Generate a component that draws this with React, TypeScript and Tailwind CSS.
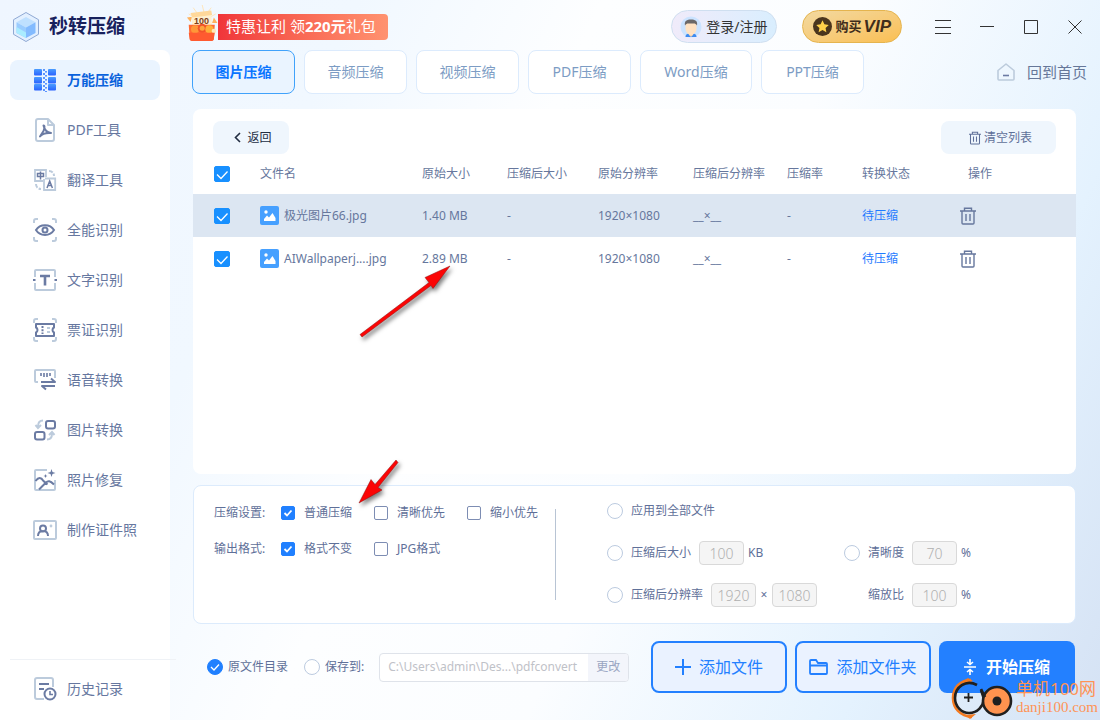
import React from 'react'

const DARK = '#6b7ba3'
const PALE = '#bccbdc'

interface IconProps {
  className?: string
}

function SvgIcon({ children }: { children: React.ReactNode }) {
  return (
    <svg width="24" height="24" viewBox="0 0 24 24" fill="none" strokeWidth="2" className="shrink-0">
      {children}
    </svg>
  )
}

const Corners = () => (
  <path d="M1 5V3a2 2 0 0 1 2-2h2M19 1h2a2 2 0 0 1 2 2v2M23 19v2a2 2 0 0 1-2 2h-2M5 23H3a2 2 0 0 1-2-2v-2" stroke={PALE} />
)

const icons: Record<string, React.ReactNode> = {
  zip: (
    <svg width="24" height="24" viewBox="0 0 24 24" className="shrink-0">
      <defs>
        <linearGradient id="zipFill" x1="0" y1="0" x2="0" y2="1">
          <stop offset="0" stopColor="#4a9dff" />
          <stop offset="1" stopColor="#2a62ff" />
        </linearGradient>
      </defs>
      {[1, 9, 16].map((y) => (
        <g key={y} fill="url(#zipFill)">
          <rect x="1" y={y} width="8" height="6.5" rx="1" />
          <rect x="15" y={y} width="8" height="6.5" rx="1" />
        </g>
      ))}
      {[1, 5, 9, 13, 17, 21].map((y) => (
        <g key={y} fill="#5c94ff">
          <rect x="10" y={y} width="2" height="2" />
          <rect x="12" y={y + 2} width="2" height="1.6" />
        </g>
      ))}
    </svg>
  ),
  pdf: (
    <SvgIcon>
      <path d="M15 1H5a2 2 0 0 0-2 2v18a2 2 0 0 0 2 2h14a2 2 0 0 0 2-2V7zM15 1v6h6" stroke={PALE} strokeLinejoin="round" />
      <path d="M10.500 7.500c1.500 0 1 3 0 5.500L7 18.500c2-2.600 5-4 11-3.500-4-.5-6.500-3-7.500-7.500" stroke={DARK} strokeLinejoin="round" strokeLinecap="round" />
    </SvgIcon>
  ),
  translate: (
    <SvgIcon>
      <path d="M13 9V2H2v11h8M12 10.500h10.200V22H11V11" stroke={PALE} strokeWidth="1.800" />
      <path d="M16 3c3 0 5 2 5 5M3 16c0 3 2 5 5 5" stroke={PALE} strokeDasharray="4 1.500" />
      <path d="M4.500 5.500h6v3h-6zM7.500 3.500v8M14 20l2.700-7 2.700 7M15 17.500h3.500" stroke={DARK} strokeWidth="1.500" />
    </SvgIcon>
  ),
  eye: (
    <SvgIcon>
      <Corners />
      <path d="M3 12c4-6.500 14-6.500 18 0-4 6.500-14 6.500-18 0z" stroke={DARK} />
      <circle cx="12" cy="12" r="2.500" stroke={DARK} />
    </SvgIcon>
  ),
  text: (
    <SvgIcon>
      <path d="M2 9V3a1 1 0 0 1 1-1h18a1 1 0 0 1 1 1v6M22 15v6a1 1 0 0 1-1 1H3a1 1 0 0 1-1-1v-6" stroke={PALE} />
      <path d="M7 8h10M12 8v9.500" stroke={DARK} strokeWidth="2.600" />
      <path d="M0 12h2.500M21.500 12h2.500" stroke={DARK} />
    </SvgIcon>
  ),
  ticket: (
    <SvgIcon>
      <Corners />
      <path d="M3 6h18v3.500c-2 1-2 4 0 5V18H3v-3.500c2-1 2-4 0-5z" stroke={DARK} strokeLinejoin="round" />
      <path d="M9.500 8v8" stroke={DARK} strokeDasharray="2 1.200" />
      <path d="M14 10h3M14 14h3" stroke={PALE} />
    </SvgIcon>
  ),
  voice: (
    <SvgIcon>
      <path d="M5 14H3a1 1 0 0 1-1-1V3a1 1 0 0 1 1-1h18a1 1 0 0 1 1 1v7" stroke={PALE} />
      <path d="M8 5v3M11 5v4M14 5v4M17 5v3" stroke={DARK} strokeWidth="1.600" />
      <path d="M8 14h14l-4-3.500M22 18H9l4 3.500" stroke={DARK} strokeLinejoin="round" />
    </SvgIcon>
  ),
  convert: (
    <SvgIcon>
      <rect x="13" y="3" width="9" height="7.500" rx="2" stroke={DARK} />
      <rect x="2" y="14" width="9.500" height="7.500" rx="2" stroke={DARK} />
      <path d="M10 2.500c-3 0-5 2-5 6M2.500 7l2.500 3L8 7M14 21.500c3 0 5-2 5-6M16 17l3-3 2.500 3" stroke={PALE} />
    </SvgIcon>
  ),
  repair: (
    <SvgIcon>
      <path d="M14 2H3a1 1 0 0 0-1 1v18a1 1 0 0 0 1 1h18a1 1 0 0 0 1-1v-9" stroke={PALE} />
      <path d="M2.500 13c3-4 5.500-4 8 0l4 3.500M6 21.500l7-7c2-2 4-2 8 2" stroke={DARK} />
      <path d="M18.500 1l1 3 3 1-3 1-1 3-1-3-3-1 3-1zM12.500 6l.6 1.400 1.400.6-1.400.6-.6 1.400-.6-1.400-1.400-.6 1.400-.6z" fill={DARK} />
    </SvgIcon>
  ),
  idphoto: (
    <SvgIcon>
      <rect x="1" y="3" width="22" height="18" rx="1" stroke={PALE} />
      <path d="M5 18c0-3 1.500-5 5-5s5 2 5 5M7 10.500a3 3 0 1 1 6 0 3 3 0 0 1-6 0z" stroke={DARK} />
      <circle cx="18" cy="8" r="1.400" fill={PALE} />
    </SvgIcon>
  ),
  history: (
    <SvgIcon>
      <path d="M20 10V3a2 2 0 0 0-2-2H4a2 2 0 0 0-2 2v17a2 2 0 0 0 2 2h7" stroke={PALE} />
      <path d="M6 7h10M6 12h5" stroke={DARK} />
      <circle cx="17" cy="17" r="5.500" stroke={DARK} />
      <path d="M17 14v3.500h3" stroke={DARK} strokeWidth="1.600" />
    </SvgIcon>
  ),
}

const navItems = [
  { icon: 'zip', label: '万能压缩', active: true },
  { icon: 'pdf', label: 'PDF工具' },
  { icon: 'translate', label: '翻译工具' },
  { icon: 'eye', label: '全能识别' },
  { icon: 'text', label: '文字识别' },
  { icon: 'ticket', label: '票证识别' },
  { icon: 'voice', label: '语音转换' },
  { icon: 'convert', label: '图片转换' },
  { icon: 'repair', label: '照片修复' },
  { icon: 'idphoto', label: '制作证件照' },
]

const tabs = [
  { label: '图片压缩', width: 'w-[103px]' },
  { label: '音频压缩', width: 'w-[103px]' },
  { label: '视频压缩', width: 'w-[103px]' },
  { label: 'PDF压缩', width: 'w-[103px]' },
  { label: 'Word压缩', width: 'w-28' },
  { label: 'PPT压缩', width: 'w-[103px]' },
]

const files = [
  { name: '极光图片66.jpg', size: '1.40 MB', resolution: '1920×1080', selected: true },
  { name: 'AIWallpaperj....jpg', size: '2.89 MB', resolution: '1920×1080', selected: false },
]

function TrashIcon({ className }: IconProps) {
  return (
    <svg viewBox="0 0 16 18" fill="none" stroke="currentColor" strokeWidth="1.4" className={className}>
      <path d="M0 4h16M4.500 4V1.200h7V4M2 4v12a1 1 0 0 0 1 1h10a1 1 0 0 0 1-1V4M6 7v7M10 7v7" />
    </svg>
  )
}

function Logo() {
  return (
    <svg width="28" height="32" viewBox="0 0 28 32">
      <path d="M14 1.500l12.500 7.200v14.600L14 30.500 1.500 23.300V8.700z" fill="#e3f0ff" stroke="#8fa9d4" />
      <path d="M14 6l9.500 5.200L14 16.500l-9.500-5.300z" fill="#bfe0ff" />
      <path d="M4.500 11.200L14 16.500V27l-9.500-5z" fill="#9accff" />
      <path d="M23.500 11.200L14 16.500V27l9.500-5z" fill="#83bbff" />
      <path d="M4.500 16L14 21.500V27l-9.500-5z" fill="#a9ecff" />
    </svg>
  )
}

function GiftIcon() {
  return (
    <svg width="36" height="44" viewBox="0 0 40 49" className="shrink-0">
      <path d="M18 0l2 8M8 3l5 7M28 3l-5 7M3 10l7 4M33 10l-7 4" stroke="#ffe3b3" />
      <path d="M1 14l6-1-2 6zM35 20l-6 0 2-6z" fill="#ffb25c" />
      <path d="M6 11l22-4 1 19H7z" fill="#fff0cf" />
      <path d="M5 9l23-3 1 5-22 3z" fill="#ffd89a" />
      <text x="9" y="21" fontSize="10" fontWeight="700" fill="#7d3d17" fontFamily="Liberation Sans, sans-serif">100</text>
      <path d="M3 22h29l-1 15a3 3 0 0 1-3 3H7a3 3 0 0 1-3-3z" fill="#ff6a32" />
      <circle cx="10" cy="27" r="4.500" fill="#ff9738" />
      <circle cx="18" cy="26" r="5" fill="#f2532a" />
      <circle cx="18" cy="26" r="2.800" fill="#ffa43d" />
      <circle cx="26" cy="27" r="4.500" fill="#ffb03a" />
      <circle cx="31" cy="29" r="2.500" fill="#ffe7b8" />
      <path d="M3 31h29l-1 6a3 3 0 0 1-3 3H7a3 3 0 0 1-3-3z" fill="#ff5a30" />
    </svg>
  )
}

function Avatar() {
  return (
    <svg width="22" height="22" viewBox="0 0 22 22">
      <circle cx="11" cy="11" r="10.500" fill="#cbe3ff" />
      <path d="M5.500 21c0-3 2-3.500 5.500-3.500s5.500.5 5.500 3.500z" fill="#3d8bf0" />
      <path d="M9 14h4v5l-2 2-2-2z" fill="#f7d3ae" />
      <path d="M5.500 7h11v5c0 4-2.500 7-5.500 7s-5.500-3-5.500-7z" fill="#ffe2c2" />
      <path d="M5 9.500C4 5 7 3.500 11 3.500s7 1.500 6 6c-1-1.500-2-2-3-2H8c-1 0-2 .5-3 2z" fill="#6b6868" />
    </svg>
  )
}

function Header() {
  return (
    <header className="flex h-[50px] shrink-0 items-center pl-3 pr-[18px] pt-[3px]">
      <Logo />
      <h1 className="ml-[9px] text-[19px] font-bold text-[#17205c]">秒转压缩</h1>
      <a href="#promo" className="ml-[61px] flex items-center text-[15px] text-white">
        <GiftIcon />
        <span className="-ml-1 flex h-[26px] items-center rounded-r bg-linear-to-r from-[#f0343a] to-[#ff9270] pl-2 pr-3">
          <span>
            特惠让利 领<b>220元</b>礼包
          </span>
        </span>
      </a>
      <div className="ml-auto flex items-center text-[#333]">
        <button className="flex h-[33px] items-center gap-1 rounded-full border border-[#cfdff0] bg-linear-to-r from-[#f0ebfa] to-[#d9eefe] pl-2 pr-2 text-[14px]">
          <Avatar />
          登录/注册
        </button>
        <button className="ml-[25px] flex h-[33px] items-center gap-1 rounded-full border border-[#e5b44e] bg-linear-to-br from-[#f2d9a0] to-[#fabf52] px-[10px] text-[#3f2d1c]">
          <svg width="19" height="19" viewBox="0 0 20 20">
            <circle cx="10" cy="10" r="10" fill="#4a351d" />
            <path d="M10 3.500l2 4.200 4.600.6-3.400 3.200.9 4.600-4.100-2.300-4.100 2.300.9-4.600-3.400-3.200 4.600-.6z" fill="#ffd04a" />
          </svg>
          <span className="flex items-center text-[13px] font-bold">
            购买<i className="ml-[2px] font-[Liberation_Sans,sans-serif] text-[17px]">VIP</i>
          </span>
        </button>
        <button aria-label="菜单" className="ml-[33px]">
          <svg width="16" height="16" viewBox="0 0 16 16" fill="none" stroke="currentColor">
            <path d="M0 1.500h16M0 8.500h16M0 14.500h16" />
          </svg>
        </button>
        <button aria-label="最小化" className="ml-[29px]">
          <svg width="14" height="14" viewBox="0 0 14 14" fill="none" stroke="currentColor">
            <path d="M0 6.500h14" />
          </svg>
        </button>
        <button aria-label="最大化" className="ml-[30px]">
          <svg width="14" height="14" viewBox="0 0 14 14" fill="none" stroke="currentColor">
            <path d="M.5.5h13v13H.5z" />
          </svg>
        </button>
        <button aria-label="关闭" className="ml-[30px]">
          <svg width="14" height="14" viewBox="0 0 14 14" fill="none" stroke="currentColor">
            <path d="M.5.5l13 13M13.500.5l-13 13" />
          </svg>
        </button>
      </div>
    </header>
  )
}

function NavButton({ icon, label, active }: { icon: string; label: string; active?: boolean }) {
  return (
    <button
      className={
        active
          ? 'flex h-10 items-center gap-[10px] rounded-lg bg-[#eaf4ff] pl-[23px] text-sm font-bold text-[#0a62dc]'
          : 'flex h-10 items-center gap-[10px] rounded-lg pl-[23px] text-sm text-[#66779f]'
      }
    >
      {icons[icon]}
      {label}
    </button>
  )
}

function Sidebar() {
  return (
    <aside className="flex w-[170px] shrink-0 flex-col rounded-tr-lg bg-white px-[10px] pb-[11px] pt-[10px]">
      <nav className="flex flex-1 flex-col gap-[10px]">
        {navItems.map((item) => (
          <NavButton key={item.label} {...item} />
        ))}
      </nav>
      <div className="-mr-4 mb-[9px] border-t border-[#eff2f6]"></div>
      <NavButton icon="history" label="历史记录" />
    </aside>
  )
}

function TableCheck({ label }: { label: string }) {
  return (
    <span className="ml-[21px] grid size-4">
      <input
        type="checkbox"
        defaultChecked
        aria-label={label}
        className="peer col-start-1 row-start-1 size-4 appearance-none rounded-[2px] border border-[#8fa3c4] checked:border-[#1890ff] checked:bg-[#1890ff]"
      />
      <svg viewBox="0 0 16 16" fill="none" stroke="#fff" strokeWidth="1.3" className="pointer-events-none invisible col-start-1 row-start-1 peer-checked:visible">
        <path d="M3 8.500l4 4 6.500-7" />
      </svg>
    </span>
  )
}

function CheckOption({ label, checked }: { label: string; checked?: boolean }) {
  return (
    <label className="flex w-[93px] shrink-0 items-center gap-[9px] whitespace-nowrap">
      <span className="grid size-[14px] shrink-0">
        <input
          type="checkbox"
          defaultChecked={checked}
          className="peer col-start-1 row-start-1 size-[14px] appearance-none rounded-[2px] border border-[#7d8db3] bg-white checked:border-[#2080ff] checked:bg-[#2080ff]"
        />
        <svg viewBox="0 0 14 14" fill="none" stroke="#fff" strokeWidth="1.8" className="pointer-events-none invisible col-start-1 row-start-1 peer-checked:visible">
          <path d="M3.500 7l2.500 2.500 4.500-5" />
        </svg>
      </span>
      {label}
    </label>
  )
}

interface RadioProps {
  name: string
  label: string
  checked?: boolean
  tight?: boolean
}

function RadioOption({ name, label, checked, tight }: RadioProps) {
  return (
    <label className={tight ? 'flex items-center gap-[5px] whitespace-nowrap' : 'flex items-center gap-2 whitespace-nowrap'}>
      <span className="grid size-4 shrink-0">
        <input
          type="radio"
          name={name}
          defaultChecked={checked}
          className="peer col-start-1 row-start-1 size-4 appearance-none rounded-full border border-[#bccbe0] bg-white checked:border-[#2080ff] checked:bg-[#2080ff]"
        />
        <svg viewBox="0 0 16 16" fill="none" stroke="#fff" strokeWidth="1.3" className="pointer-events-none invisible col-start-1 row-start-1 peer-checked:visible">
          <path d="M4 8l3 3 5-5.500" />
        </svg>
      </span>
      {label}
    </label>
  )
}

function NumberBox({ value, label }: { value: string; label: string }) {
  return (
    <input
      disabled
      defaultValue={value}
      aria-label={label}
      className="h-6 w-[45px] rounded border border-[#d9d9d9] bg-[#f5f5f5] text-center text-sm font-light text-[#b0b0b0]"
    />
  )
}

function FileTable() {
  return (
    <section className="flex-1 rounded-lg bg-white pt-3">
      <div className="flex justify-between px-5">
        <button className="flex h-[33px] w-[76px] items-center justify-center gap-[6px] rounded-lg bg-[#eff6fd] pl-1 text-xs text-[#222d42]">
          <svg width="7" height="11" viewBox="0 0 7 11" fill="none" stroke="currentColor" strokeWidth="1.6">
            <path d="M6 1L1.500 5.500 6 10" />
          </svg>
          返回
        </button>
        <button className="flex h-[33px] w-[115px] items-center justify-center gap-[3px] rounded-lg bg-[#eff6fd] pl-1 text-xs text-[#5f7099]">
          <TrashIcon className="h-[14px] w-3" />
          清空列表
        </button>
      </div>
      <table className="w-full table-fixed text-left text-xs text-[#66779d]">
        <colgroup>
          <col className="w-[67px]" />
          <col />
          <col className="w-[85px]" />
          <col className="w-[91px]" />
          <col className="w-[95px]" />
          <col className="w-[94px]" />
          <col className="w-[75px]" />
          <col className="w-[98px]" />
          <col className="w-[116px]" />
        </colgroup>
        <thead>
          <tr className="h-10">
            <th><TableCheck label="全选" /></th>
            <th className="font-normal">文件名</th>
            <th className="font-normal">原始大小</th>
            <th className="font-normal">压缩后大小</th>
            <th className="font-normal">原始分辨率</th>
            <th className="font-normal">压缩后分辨率</th>
            <th className="font-normal">压缩率</th>
            <th className="font-normal">转换状态</th>
            <th className="pl-2 font-normal">操作</th>
          </tr>
        </thead>
        <tbody>
          {files.map((file) => (
            <tr key={file.name} className={file.selected ? 'h-[43px] bg-[#dce6f2]' : 'h-[43px]'}>
              <td><TableCheck label={file.name} /></td>
              <td>
                <div className="flex items-center gap-[5px]">
                  <svg width="19" height="19" viewBox="0 0 19 19" className="shrink-0">
                    <rect width="19" height="19" rx="2" fill="#46a0ff" />
                    <circle cx="6" cy="6" r="1.700" fill="#fff" />
                    <path d="M4 15v-2l3-3.500 2 2 3.500-4.500 3 5v3z" fill="#fff" />
                  </svg>
                  {file.name}
                </div>
              </td>
              <td>{file.size}</td>
              <td>-</td>
              <td>{file.resolution}</td>
              <td>__×__</td>
              <td>-</td>
              <td className="text-[#1f7bff]">待压缩</td>
              <td>
                <button aria-label="删除" className="block">
                  <TrashIcon className="h-[18px] w-4" />
                </button>
              </td>
            </tr>
          ))}
        </tbody>
      </table>
    </section>
  )
}

function Settings() {
  return (
    <section className="mt-[11px] flex rounded-lg border border-[#dcebfc] bg-white pb-4 pl-5 pt-[13px] text-xs text-[#5f7099]">
      <div className="flex w-[341px] shrink-0 flex-col gap-3 pt-[2px]">
        <div className="flex h-6 items-center">
          <span className="w-[67px] shrink-0">压缩设置:</span>
          <CheckOption label="普通压缩" checked />
          <CheckOption label="清晰优先" />
          <CheckOption label="缩小优先" />
        </div>
        <div className="flex h-6 items-center">
          <span className="w-[67px] shrink-0">输出格式:</span>
          <CheckOption label="格式不变" checked />
          <CheckOption label="JPG格式" />
        </div>
      </div>
      <div className="mb-[7px] mt-[10px] w-px bg-[#b8c4d4]"></div>
      <div className="ml-[51px] grid grid-cols-[237px_1fr] content-start gap-y-[18px]">
        <div className="col-span-2 flex h-6 items-center">
          <RadioOption name="target" label="应用到全部文件" />
        </div>
        <div className="flex items-center">
          <RadioOption name="target" label="压缩后大小" />
          <span className="ml-2 flex items-center gap-1">
            <NumberBox value="100" label="压缩后大小" />
            KB
          </span>
        </div>
        <div className="flex items-center">
          <RadioOption name="target" label="清晰度" />
          <span className="ml-2 flex items-center gap-1">
            <NumberBox value="70" label="清晰度" />
            %
          </span>
        </div>
        <div className="flex items-center">
          <RadioOption name="target" label="压缩后分辨率" />
          <span className="ml-2 flex items-center gap-1">
            <NumberBox value="1920" label="宽度" />
            <span className="w-2 text-center">×</span>
            <NumberBox value="1080" label="高度" />
          </span>
        </div>
        <div className="flex items-center gap-2 pl-6">
          缩放比
          <span className="flex items-center gap-1">
            <NumberBox value="100" label="缩放比" />
            %
          </span>
        </div>
      </div>
    </section>
  )
}

function Footer() {
  const outline = 'flex h-[52px] w-[136px] items-center justify-center gap-2 rounded-lg border-2 border-[#2380ff] bg-[#eaf2ff] text-base text-[#2380ff]'

  return (
    <footer className="mt-[17px] flex items-center pl-[14px] pr-px text-xs text-[#5f7099]">
      <div className="flex items-center gap-4">
        <RadioOption name="folder" label="原文件目录" checked tight />
        <RadioOption name="folder" label="保存到:" tight />
      </div>
      <div className="ml-[15px] flex h-[29px] w-[250px] overflow-hidden rounded border border-[#dfe3ea] bg-white">
        <input
          disabled
          defaultValue="C:\Users\admin\Des...\pdfconvert"
          aria-label="保存路径"
          className="min-w-0 flex-1 pl-2 text-[#bfc2c8]"
        />
        <button className="w-10 bg-[#f3f5fb] text-[#9aa6c2]">更改</button>
      </div>
      <div className="ml-auto flex gap-2">
        <button className={outline}>
          <svg width="16" height="16" viewBox="0 0 16 16" stroke="currentColor" strokeWidth="2">
            <path d="M8 0v16M0 8h16" />
          </svg>
          添加文件
        </button>
        <button className={outline}>
          <svg width="19" height="16" viewBox="0 0 19 16" fill="none" stroke="currentColor" strokeWidth="1.8">
            <path d="M1 14V2a1 1 0 0 1 1-1h5l2 3h8a1 1 0 0 1 1 1v9a1 1 0 0 1-1 1H2a1 1 0 0 1-1-1zM1 6.500h17" />
          </svg>
          添加文件夹
        </button>
        <button className="flex h-[52px] w-[136px] items-center justify-center gap-[10px] rounded-lg bg-[#2380ff] text-base font-bold text-white">
          <svg width="12" height="16" viewBox="0 0 12 16" fill="none" stroke="currentColor" strokeWidth="1.6">
            <path d="M0 8h12M6 0v5M3 3l3 2.500L9 3M6 16v-5M3 13l3-2.500L9 13" />
          </svg>
          开始压缩
        </button>
      </div>
    </footer>
  )
}

// Red pointers drawn over the window
function Pointers() {
  return (
    <svg width="110" height="250" viewBox="0 0 110 250" className="pointer-events-none absolute left-[355px] top-[262px] drop-shadow-[2px_3px_2px_rgba(0,0,0,0.5)]">
      <g fill="#fb0505" stroke="#8c1010" strokeWidth="0.5">
        <path d="M5 72.500L74 20.500 70 15.500 95 4 78 26.500l-2-3L7 75z" />
        <path d="M41 198l2 2.500-20 25 4 2.500L4 241l12-23.500 4 5z" />
      </g>
    </svg>
  )
}

function Watermark() {
  return (
    <div className="pointer-events-none absolute bottom-px right-[2px] flex items-center gap-[2px] text-[#ff9355]">
      <svg width="64" height="42" viewBox="0 0 64 42" fill="none">
        <path d="M21 3C10 3 3 11 3 21s7 18 19 19" stroke="#f47a20" strokeWidth="2.600" />
        <path d="M10 6l8-5 5 3-5 2zM15 38l11-1-6 5z" fill="#f47a20" />
        <path d="M27 8C16 2 5 10 5 21c0 9 7 15 14 15 9 0 14-7 15-14l-3-9" stroke="#202020" strokeWidth="2.600" />
        <path d="M14 20.500h9M18.500 16v9" stroke="#202020" strokeWidth="1.800" />
        <circle cx="47" cy="24" r="14" fill="#ff934f" stroke="#202020" strokeWidth="2.600" />
        <path d="M31 12l4 8" stroke="#202020" strokeWidth="2.600" />
        <circle cx="47" cy="24" r="4.500" fill="#202020" />
      </svg>
      <div>
        <div className="text-[17px] leading-[18px]">单机100网</div>
        <div className="font-[Liberation_Serif,serif] text-[15px] leading-[18px]">danji100.com</div>
      </div>
    </div>
  )
}

function App() {
  return (
    <div className="relative flex min-h-screen flex-col bg-[linear-gradient(115deg,#eff6ff_0%,#f1f8ff_25%,#fdfeff_42%,#fbfdff_60%,#e4f2fe_82%,#d5e2f4_100%)] font-['Noto_Sans','Noto_Sans_CJK_SC',sans-serif]">
      <Header />
      <div className="flex flex-1">
        <Sidebar />
        <main className="flex min-w-0 flex-1 flex-col pb-[27px] pl-[23px] pr-6">
          <div className="-ml-px -mr-[11px] flex items-center justify-between">
            <div className="flex gap-[9px]">
              {tabs.map((tab, i) => (
                <button
                  key={tab.label}
                  className={
                    i === 0
                      ? `${tab.width} h-11 rounded-lg border border-[#40a2fb] bg-[#eaf4ff] text-sm font-bold text-[#0a74ff]`
                      : `${tab.width} h-11 rounded-lg border border-[#dcebfd] bg-white text-sm text-[#7c9cc4]`
                  }
                >
                  {tab.label}
                </button>
              ))}
            </div>
            <a href="#home" className="flex items-center gap-3 text-[15px] text-[#667799]">
              <svg width="18" height="18" viewBox="0 0 18 18" fill="none" strokeWidth="1.6">
                <path d="M1 7.500L9 1l8 6.500V16a1 1 0 0 1-1 1H2a1 1 0 0 1-1-1z" stroke="#bccbdc" strokeLinejoin="round" />
                <path d="M6 12.500h6" stroke="#6b7ba3" />
              </svg>
              回到首页
            </a>
          </div>
          <div className="mt-[15px] flex flex-1 flex-col">
            <FileTable />
            <Settings />
            <Footer />
          </div>
        </main>
      </div>
      <Pointers />
      <Watermark />
    </div>
  )
}

export default App
